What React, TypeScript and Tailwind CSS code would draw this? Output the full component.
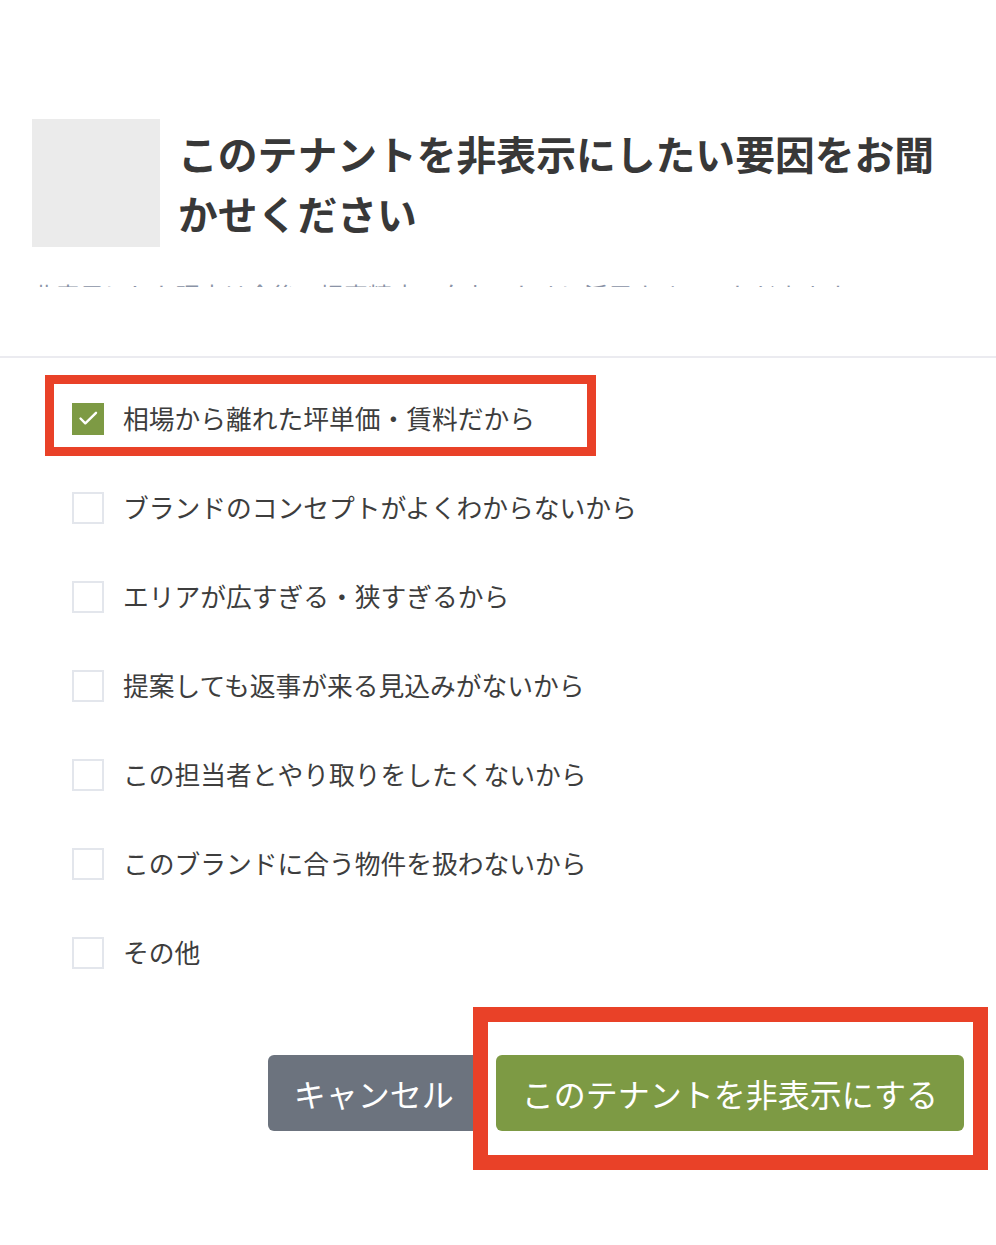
const reasons = [
  "相場から離れた坪単価・賃料だから",
  "ブランドのコンセプトがよくわからないから",
  "エリアが広すぎる・狭すぎるから",
  "提案しても返事が来る見込みがないから",
  "この担当者とやり取りをしたくないから",
  "このブランドに合う物件を扱わないから",
  "その他",
];

function CheckBox({ checked }: { checked: boolean }) {
  if (checked) {
    return (
      <span className="flex h-8 w-8 shrink-0 items-center justify-center bg-[#7d9a44]">
        <svg width="32" height="32" viewBox="0 0 32 32" fill="none">
          <path d="M8.5 15.5l4.8 4.8L24 9.8" stroke="#fff" strokeWidth="2.4" strokeLinecap="round" strokeLinejoin="round" />
        </svg>
      </span>
    );
  }
  return <span className="h-8 w-8 shrink-0 border-2 border-[#e3e6ec] bg-white" />;
}

export default function App() {
  return (
    <div className="relative min-h-[1245px] w-full bg-white font-['Noto_Sans_CJK_JP','Noto_Sans',sans-serif]">
      {/* header */}
      <div className="pt-[119px]">
        <div className="flex items-center gap-[18px] px-8">
          <div className="h-32 w-32 shrink-0 bg-[#ebebeb]" />
          <h1 className="text-[39.8px] font-bold leading-[60px] text-[#383838]">
            このテナントを非表示にしたい要因をお聞かせください
          </h1>
        </div>
        <div className="mt-[31px] h-[9px] overflow-hidden px-8">
          <p className="-mt-px whitespace-nowrap text-[24px] leading-[36px] text-[#8a93a6]">
            非表示にした理由は今後の提案精度の向上のために活用させていただきます
          </p>
        </div>
      </div>

      <div className="mt-[69px] h-[2px] bg-[#ebebf0]" />

      {/* reasons */}
      <ul className="pt-4">
        {reasons.map((r, i) => (
          <li key={r} className="flex h-[89px] items-center gap-[19px] pl-[72px]">
            <CheckBox checked={i === 0} />
            <span className="text-[25.75px] text-[#3d3d3d]">{r}</span>
          </li>
        ))}
      </ul>

      {/* buttons */}
      <div className="mt-[58px] flex justify-end gap-4 pr-8">
        <button className="flex h-[76px] items-center rounded-md bg-[#6c737e] px-[26px] text-[32px] text-white">
          キャンセル
        </button>
        <button className="flex h-[76px] items-center rounded-md bg-[#7d9a44] px-[26px] text-[32px] text-white">
          このテナントを非表示にする
        </button>
      </div>

      {/* annotation boxes */}
      <div className="pointer-events-none absolute left-[45px] top-[375px] h-[81px] w-[551px] border-[9px] border-[#e94128]" />
      <div className="pointer-events-none absolute left-[473px] top-[1007px] h-[163px] w-[515px] border-[15px] border-[#e94128]" />
    </div>
  );
}
